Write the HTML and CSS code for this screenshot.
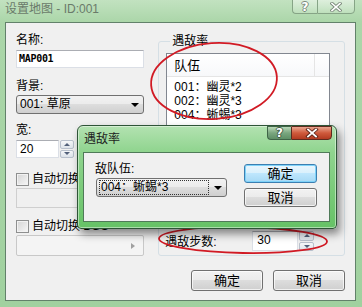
FILE: index.html
```html
<!DOCTYPE html>
<html lang="zh-CN">
<head>
    <meta charset="UTF-8">
    <title>设置地图 - ID:001</title>
    <link rel="stylesheet" href="styles.css">
</head>
<body>
<div class="window">
    <div class="titlebar">
        <span class="title">设置地图 - ID:001</span>
        <div class="caption">
            <span class="cap-btn cap-help">?</span>
            <span class="cap-btn cap-close">
                <svg width="12" height="10" viewBox="0 0 12 10">
                    <path d="M2 1.5 L10 8.5 M10 1.5 L2 8.5" stroke="#7b8a7b" stroke-width="3.4" stroke-linecap="square"/>
                    <path d="M2 1.5 L10 8.5 M10 1.5 L2 8.5" stroke="#fff" stroke-width="1.6" stroke-linecap="square"/>
                </svg>
            </span>
        </div>
    </div>

    <div class="client">
        <div class="columns">
            <div class="left">
                <div class="lbl">名称:</div>
                <div class="edit name-edit">MAP001</div>

                <div class="lbl lbl-bg">背景:</div>
                <div class="combo"><span>001: 草原</span><span class="arrow"></span></div>

                <div class="lbl lbl-w">宽:</div>
                <div class="spin-field width-field">
                    <div class="edit">20</div>
                    <div class="spin"><span class="spin-up"></span><span class="spin-down"></span></div>
                </div>

                <label class="check check-bgm"><span class="box"></span>自动切换 BGM</label>
                <div class="edit disabled bgm-edit"></div>

                <label class="check check-bgs"><span class="box"></span>自动切换 BGS</label>
                <div class="combo disabled bgs-combo"><span></span><span class="arrow-right"></span></div>
            </div>

            <fieldset class="group">
                <legend>遇敌率</legend>
                <div class="listview">
                    <div class="lv-head">
                        <span class="col-team">队伍</span>
                        <span class="col-rest"></span>
                    </div>
                    <div class="lv-body">
                        <div class="lv-row">001：幽灵*2</div>
                        <div class="lv-row">002：幽灵*3</div>
                        <div class="lv-row">004：蜥蜴*3</div>
                    </div>
                </div>
                <div class="step-row">
                    <span class="step-label">遇敌步数:</span>
                    <div class="spin-field step-field">
                        <div class="edit">30</div>
                        <div class="spin"><span class="spin-up"></span><span class="spin-down"></span></div>
                    </div>
                </div>
            </fieldset>
        </div>

        <div class="actions">
            <button class="btn">确定</button>
            <button class="btn">取消</button>
        </div>
    </div>

    <!-- red marker circles drawn over the screenshot -->
    <svg class="marks" width="362" height="307" viewBox="0 0 362 307">
        <ellipse cx="214" cy="81" rx="63" ry="38" transform="rotate(-4 214 81)"/>
        <ellipse cx="243" cy="240" rx="84" ry="13" transform="rotate(1 243 240)"/>
    </svg>

    <div class="dialog">
        <div class="dlg-titlebar">
            <span class="dlg-title">遇敌率</span>
            <div class="dlg-caption">
                <span class="dcap dcap-help">?</span>
                <span class="dcap dcap-close">
                    <svg width="14" height="10" viewBox="0 0 14 10">
                        <path d="M3 1.5 L11 8.5 M11 1.5 L3 8.5" stroke="#5b2418" stroke-width="3.6" stroke-linecap="square"/>
                        <path d="M3 1.5 L11 8.5 M11 1.5 L3 8.5" stroke="#fff" stroke-width="1.8" stroke-linecap="square"/>
                    </svg>
                </span>
            </div>
        </div>
        <div class="dlg-client">
            <div class="dlg-left">
                <div class="dlg-lbl">敌队伍:</div>
                <div class="combo dlg-combo"><span class="focus">004：蜥蜴*3</span><span class="arrow"></span></div>
            </div>
            <div class="dlg-buttons">
                <button class="btn btn-default">确定</button>
                <button class="btn">取消</button>
            </div>
        </div>
    </div>
</div>
</body>
</html>
```

FILE: styles.css
```css
* {
    box-sizing: border-box;
}
body {
    margin: 0;
    background: #f0f0f0;
}
.window {
    position: relative;
    width: 362px;
    height: 307px;
    display: flex;
    flex-direction: column;
    overflow: hidden;
    background: linear-gradient(180deg, #c2e2c0 0%, #abd6a9 22px, #a0d19f 100%);
    font-family: "Liberation Sans", "Noto Sans CJK SC", sans-serif;
    font-size: 12px;
    color: #000;
}

/* outer title bar (inactive) */
.titlebar {
    height: 22px;
    flex-shrink: 0;
    display: flex;
    align-items: flex-start;
}
.title {
    padding-left: 5px;
    line-height: 18px;
    color: #6a7a6a;
}
.caption {
    display: flex;
    margin: -1px 7px 0 auto;
}
.cap-btn {
    height: 15px;
    display: flex;
    align-items: center;
    justify-content: center;
    border: 1px solid #86a486;
    background: linear-gradient(rgba(255, 255, 255, 0.45), rgba(255, 255, 255, 0.12));
    color: #fff;
    font: bold 12px "DejaVu Sans", sans-serif;
    text-shadow: 1px 0 #7b8a7b, -1px 0 #7b8a7b, 0 1px #7b8a7b, 0 -1px #7b8a7b;
}
.cap-help {
    width: 25px;
    border-right: none;
    border-radius: 0 0 0 4px;
}
.cap-close {
    width: 38px;
    border-radius: 0 0 4px 0;
}

/* main client area */
.client {
    flex: 1;
    margin: 0 6px 6px 5px;
    padding: 9px 10px 0 10px;
    background: #f0f0f0;
    border: 1px solid #62816a;
}
.columns {
    display: flex;
}
.left {
    width: 131px;
    display: flex;
    flex-direction: column;
}
.lbl {
    height: 17px;
    line-height: 17px;
}
.lbl-bg {
    margin-top: 10px;
}
.lbl-w {
    margin-top: 8px;
}

.edit {
    height: 18px;
    margin-top: 1px;
    padding-left: 2px;
    line-height: 16px;
    background: #fff;
    border: 1px solid #dbdfe6;
    border-top-color: #abadb3;
}
.name-edit {
    font: bold 10px "DejaVu Sans Mono", monospace;
    line-height: 16px;
    letter-spacing: -0.3px;
}
.edit.disabled {
    height: 20px;
    background: #f0f0f0;
    border: 1px solid #cfcfcf;
}

.combo {
    height: 19px;
    display: flex;
    align-items: center;
    justify-content: space-between;
    padding: 0 4px 0 3px;
    border: 1px solid #707070;
    border-radius: 3px;
    background: linear-gradient(#f2f2f2 0%, #ebebeb 49%, #dddddd 50%, #cfcfcf 100%);
    line-height: 17px;
}
.arrow {
    width: 0;
    height: 0;
    border-left: 4px solid transparent;
    border-right: 4px solid transparent;
    border-top: 4px solid #000;
}
.combo.disabled {
    height: 21px;
    margin-top: 1px;
    background: #f4f4f4;
    border-color: #c8c8c8;
    border-radius: 2px;
}
.arrow-right {
    width: 0;
    height: 0;
    margin-right: 4px;
    border-top: 3px solid transparent;
    border-bottom: 3px solid transparent;
    border-left: 4px solid #a0a0a0;
}

.spin-field {
    display: flex;
    height: 18px;
    margin-top: 1px;
}
.spin-field .edit {
    height: 100%;
    margin: 0;
    padding-left: 3px;
}
.width-field .edit {
    width: 43px;
}
.spin {
    width: 14px;
    margin-left: 1px;
    display: flex;
    flex-direction: column;
    gap: 1px;
}
.spin span {
    flex: 1;
    display: flex;
    align-items: center;
    justify-content: center;
    border: 1px solid #b8c0cc;
    border-radius: 2px;
    background: linear-gradient(#f6f7f9, #dde3ea);
}
.spin-up::before {
    content: "";
    border-left: 3px solid transparent;
    border-right: 3px solid transparent;
    border-bottom: 3px solid #52607a;
}
.spin-down::before {
    content: "";
    border-left: 3px solid transparent;
    border-right: 3px solid transparent;
    border-top: 3px solid #52607a;
}

.check {
    height: 16px;
    display: flex;
    align-items: center;
    gap: 3px;
    line-height: 16px;
    white-space: nowrap;
}
.check-bgm {
    margin-top: 13px;
}
.check-bgs {
    margin-top: 10px;
}
.box {
    width: 13px;
    height: 13px;
    border: 1px solid #8e8f8f;
    background: linear-gradient(135deg, #d4d4d4, #f7f7f7);
    box-shadow: inset 0 0 0 1px #f2f2f2;
}

/* encounter group */
.group {
    width: 190px;
    margin: 1px 0 0 14px;
    padding: 3px 14px 1px 7px;
    min-width: 0;
    border: 1px solid #d5dfe5;
    border-radius: 3px;
}
.group legend {
    padding: 0 2px;
    margin-left: 4px;
    line-height: 17px;
}
.listview {
    height: 172px;
    background: #fff;
    border: 1px solid #828790;
}
.lv-head {
    display: flex;
    height: 23px;
    border-bottom: 1px solid #e5e5e5;
    background: linear-gradient(#fff, #f7f8fa);
}
.col-team {
    width: 148px;
    padding-left: 7px;
    font-size: 13px;
    line-height: 23px;
    border-right: 1px solid #e5e5e5;
}
.lv-body {
    padding: 3px 0 0 7px;
}
.lv-row {
    height: 14px;
    line-height: 14px;
}
.step-row {
    height: 21px;
    margin-top: 5px;
    display: flex;
    align-items: center;
}
.step-label {
    width: 87px;
    margin-left: -1px;
}
.step-field {
    height: 20px;
}
.step-field .edit {
    width: 46px;
    padding-left: 4px;
}
.step-field .spin {
    width: 15px;
}

.actions {
    display: flex;
    justify-content: flex-end;
    gap: 10px;
    margin-top: 14px;
}
.btn {
    width: 72px;
    height: 21px;
    padding: 0;
    border: 1px solid #707070;
    border-radius: 3px;
    background: linear-gradient(#f2f2f2 0%, #ebebeb 49%, #dddddd 50%, #cfcfcf 100%);
    box-shadow: inset 0 0 0 1px rgba(255, 255, 255, 0.7);
    font: 13px "Liberation Sans", "Noto Sans CJK SC", sans-serif;
    line-height: 17px;
    color: #000;
}

/* red marks */
.marks {
    position: absolute;
    left: 0;
    top: 0;
    pointer-events: none;
}
.marks ellipse {
    fill: none;
    stroke: #d11a24;
    stroke-width: 1.8;
}

/* child dialog lying over the window */
.dialog {
    position: absolute;
    left: 77px;
    top: 125px;
    width: 260px;
    height: 104px;
    display: flex;
    flex-direction: column;
    padding: 0 6px 6px 5px;
    border: 1px solid #2e5437;
    border-radius: 6px 6px 4px 4px;
    background: linear-gradient(180deg, #b3e2b1 0%, #8fd48e 26px, #66c266 100%);
    box-shadow: 3px 5px 9px rgba(0, 0, 0, 0.45), inset 0 0 0 1px rgba(255, 255, 255, 0.45);
}
.dlg-titlebar {
    height: 26px;
    flex-shrink: 0;
    display: flex;
    align-items: flex-start;
}
.dlg-title {
    align-self: center;
    padding-left: 1px;
    line-height: 17px;
    color: #1e1e1e;
}
.dlg-caption {
    display: flex;
    margin: 0 -2px 0 auto;
}
.dcap {
    height: 14px;
    display: flex;
    align-items: center;
    justify-content: center;
    color: #fff;
    font: bold 12px "DejaVu Sans", sans-serif;
    text-shadow: 1px 0 #3e5a44, -1px 0 #3e5a44, 0 1px #3e5a44, 0 -1px #3e5a44;
}
.dcap-help {
    width: 24px;
    border: 1px solid #3f6447;
    border-right: none;
    border-radius: 0 0 0 4px;
    background: linear-gradient(#b9d8b8, #7aa67f 50%, #5e8f66);
}
.dcap-close {
    width: 41px;
    border: 1px solid #5c2a1e;
    border-radius: 0 0 4px 0;
    background: linear-gradient(#e9a58f, #cf5a3c 50%, #b23a20);
}
.dlg-client {
    flex: 1;
    display: flex;
    padding: 9px 0 0 11px;
    background: #f0f0f0;
    border: 1px solid #4f7a58;
}
.dlg-left {
    display: flex;
    flex-direction: column;
}
.dlg-lbl {
    height: 16px;
    line-height: 14px;
}
.dlg-combo {
    width: 131px;
    margin-left: 1px;
    padding-left: 2px;
}
.focus {
    width: 110px;
    line-height: 13px;
    padding-left: 1px;
    border: 1px dotted #333;
}
.dlg-buttons {
    display: flex;
    flex-direction: column;
    gap: 5px;
    margin: 2px 0 0 17px;
}
.dlg-buttons .btn {
    width: 73px;
    height: 19px;
    line-height: 15px;
}
.btn-default {
    border-color: #3c7fb1;
    background: linear-gradient(#eaf6fd 0%, #d9f0fc 49%, #bee6fd 50%, #a7d9f5 100%);
    box-shadow: inset 0 0 0 1px #7fd3f9;
}
```
